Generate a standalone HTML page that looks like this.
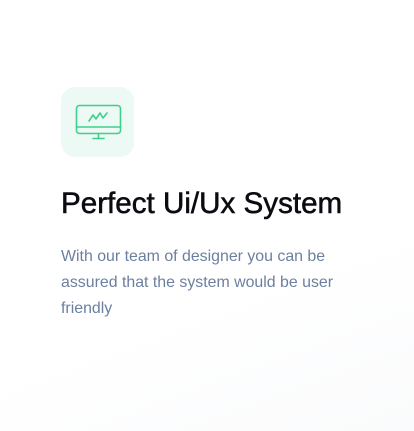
<!DOCTYPE html>
<html><head><style>
html,body{margin:0;padding:0;width:414px;height:431px;overflow:hidden;background:linear-gradient(160deg,#ffffff 65%,#fafbfc 100%);font-family:"Liberation Sans","DejaVu Sans",sans-serif;}
.box{position:absolute;left:61px;top:87px;width:73px;height:70px;border-radius:14px;background:#edf9f4;}
h1{position:absolute;left:61px;top:187px;margin:0;font-size:29.6px;font-weight:normal;-webkit-text-stroke:0.55px #0b0b12;color:#0b0b12;}
p{position:absolute;left:61px;top:244px;margin:0;width:290px;font-size:15.9px;line-height:26px;color:#6c7f9f;}
</style></head><body>
<div class="box"></div>
<svg style="position:absolute;left:0;top:0" width="414" height="431">
<g fill="none" stroke="#3fcf8e" stroke-width="1.6" stroke-linejoin="round" stroke-linecap="round">
<rect x="76.5" y="105.5" width="44" height="28" rx="3"/>
<line x1="76.5" y1="127" x2="120.5" y2="127"/>
<line x1="98.5" y1="133.5" x2="98.5" y2="138"/>
<line x1="93" y1="138.5" x2="104" y2="138.5"/>
<polyline points="89,121 93,115 96,119 100,113 103,118 107,113"/>
</g></svg>
<h1>Perfect Ui/Ux System</h1>
<p>With our team of designer you can be assured that the system would be user friendly</p>
</body></html>
